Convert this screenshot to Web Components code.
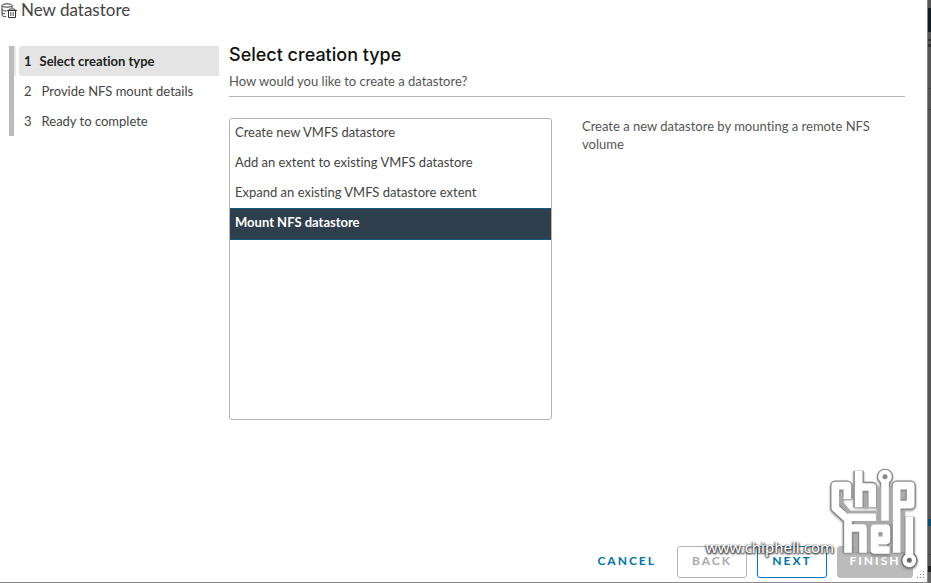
<!DOCTYPE html>
<html lang="en">
<head>
<meta charset="utf-8">
<title>New datastore</title>
<style>
html,body{height:100%;margin:0}
body{font:13px/18px Lato,sans-serif;font-variant-ligatures:none;color:#555;background:#fff;overflow:hidden}
</style>
</head>
<body>
<ds-app></ds-app>
<script>
const define=(name,html,ready)=>customElements.define(name,class extends HTMLElement{
  connectedCallback(){
    if(this.shadowRoot)return;
    const t=document.createElement('template');
    t.innerHTML=html;
    this.attachShadow({mode:'open'}).append(t.content.cloneNode(true));
    if(ready)ready(this,this.shadowRoot);
  }
});

define('ds-title',`<style>
:host{display:flex;align-items:flex-start;gap:4px;height:22px}
h1{margin:0;font-size:17px;line-height:20px;font-weight:400;color:#444}
svg{width:16px;height:16px;margin:3px 0 0 1px}
</style>
<svg viewBox="0 0 16 16" fill="none" stroke="#333" aria-hidden="true"><ellipse cx="6" cy="2.500" rx="5" ry="1.700"/><path d="M1 2.500v9.500c0 1 1.500 1.700 4 1.700M11 2.500v2.500M1 6.500c.5 1 2 1.500 4.500 1.500M1 9.700c.5.700 1.500 1 3 1.200"/><path d="M6 7.500h10M7.500 7.500v7h7v-7M7.500 7.500l1-1.500h5l1 1.500"/><path d="M9.500 9v4M11 9v4M12.500 9v4" stroke-width=".6"/></svg>
<h1><slot></slot></h1>`);

define('ds-step',`<style>
:host{display:block;padding-left:3px;border-left:2px solid transparent}
button{display:flex;gap:10px;width:100%;height:30px;padding:0 5px 1px;border:0;border-radius:3px 0 0 3px;background:none;color:#444;font:400 13px/18px Lato,sans-serif;font-variant-ligatures:none;align-items:center;text-align:left}
:host([current]){border-left-color:#e8e8e8}
:host([current]) button{gap:8px;background:#e4e4e4;color:#222;font-weight:700}
</style><button type="button"><span id="n"></span><span><slot></slot></span></button>`,
(h,r)=>{r.getElementById('n').textContent=h.getAttribute('n');if(h.hasAttribute('current'))r.querySelector('button').setAttribute('aria-current','step')});

define('ds-steps',`<style>
:host{display:block;border-left:5px solid #bbb}
</style><slot></slot>`);

define('ds-heading',`<style>
:host{display:block;border-bottom:1px solid #b5b5b5;padding-bottom:6px}
h2{margin:0;padding-top:1px;font:500 18px/24px Inter,sans-serif;color:#111}
p{margin:5px 0 0}
</style><h2><slot name="title"></slot></h2><p><slot></slot></p>`);

define('ds-option',`<style>
:host{display:block}
button{display:block;width:100%;height:30px;padding:0 5px 5px;border:0;background:none;text-align:left;color:#444;font:400 13px/18px Lato,sans-serif;font-variant-ligatures:none}
:host([selected]){margin-top:-1px}
:host([selected]) button{height:32px;background:#2f3e4d;color:#fff;font-weight:700;border:solid #12597c;border-width:1px 0}
</style><button type="button" role="option"><slot></slot></button>`,
(h,r)=>r.querySelector('button').setAttribute('aria-selected',h.hasAttribute('selected')));

define('ds-listbox',`<style>
:host{display:block;box-sizing:border-box;height:302px;border:1px solid #b5b5b5;border-radius:3px;overflow:auto}
</style><div role="listbox" aria-label="Creation type"><slot></slot></div>`);

define('ds-button',`<style>
:host{display:block}
button{height:32px;min-width:70px;padding:0 12px 2px;border:1px solid #0079b8;border-radius:3px;background:none;color:#0072a3;font:700 12px/18px Lato,sans-serif;letter-spacing:2px}
:host([kind=link]) button{border-color:transparent;padding:0 10px 2px}
button:disabled{border-color:#b5b5b5;color:#aaa}
:host([kind=solid]) button{background:#bbb;color:#fff;border-color:#bbb;min-width:76px;padding:0 10px 2px}
</style><button type="button"><slot></slot></button>`,
(h,r)=>{r.querySelector('button').disabled=h.hasAttribute('disabled')});

define('ds-watermark',`<style>
:host{position:absolute;right:5px;bottom:7px;pointer-events:none}
svg{display:block;width:98px;height:111px;filter:drop-shadow(0 1px 1px #888)}
span{position:absolute;right:88px;bottom:19px;font:15px/18px "Noto Sans","Open Sans",sans-serif;color:#fff;text-shadow:0 1px 2px #333,1px 1px 2px #333,-1px 0 2px #555}
</style>
<svg viewBox="0 0 294 333" fill="none" aria-hidden="true">
<defs><filter id="b" x="-10%" y="-10%" width="120%" height="120%"><feGaussianBlur stdDeviation="2"/></filter>
<g id="l" stroke-linejoin="round"><path d="M70 105V65H34V132L72 166V266M72 160H156"/><path d="M104 20V130M104 69H145V130M183 50V170"/><path d="M218 266V65H260V122H218M256 158V276"/><path d="M72 192H117V266M152 229H187V193H152V258H197"/></g></defs>
<g filter="url(#b)"><use href="#l" stroke="#8a8a8a" stroke-width="31"/><circle cx="183" cy="38" r="24" fill="#8a8a8a"/><circle cx="256" cy="289" r="25" fill="#777"/></g>
<path d="M52 98V118L76 146H156M125 88V132M165 70V172M200 70V180M90 180H195M236 84V104M236 140V264M96 210V264M136 182V264M170 211V215M152 243H188" stroke="#aaa" stroke-width="12"/>
<use href="#l" stroke="#fff" stroke-width="23"/>
<g stroke="#fff" stroke-width="13"><circle cx="183" cy="38" r="14" fill="#888"/><circle cx="256" cy="289" r="14" fill="#666"/></g></svg>
<span>www.chiphell.com</span>`);

define('ds-grip',`<style>
:host{position:absolute;right:2px;bottom:3px;width:8px;height:8px}
svg{display:block}
</style><svg width="8" height="8" viewBox="0 0 8 8" fill="#888" aria-hidden="true"><path d="M6 0h1v1H6zM3 3h1v1H3zM6 3h1v1H6zM0 6h1v1H0zM3 6h1v1H3zM6 6h1v1H6z"/></svg>`);

define('ds-backdrop',`<style>
:host{display:block;width:3px;background:linear-gradient(#555 8px,#101b23 8px 32px,#555 32px 39px,#333 39px 41px,#555 41px 44px,#333 44px 47px,#555 47px 88px,#444 88px 89px,#555 89px 109px,#444 109px 110px,#555 110px 519px,#124a6c 519px 526px,#555 526px 554px,#444 554px 555px,#555 555px 566px,#222 566px 572px,#666 572px)}
</style>`);

define('ds-app',`<style>
:host{display:flex;height:100%}
main{flex:1;min-width:0;display:flex;flex-direction:column;position:relative;border-right:1px solid #888;border-bottom:1px solid #888;box-sizing:border-box}
.body{flex:1;display:grid;grid-template-columns:210px 1fr;column-gap:10px;padding:20px 22px 0 9px}
ds-steps{align-self:start;margin-top:4px}
.cols{display:grid;grid-template-columns:323px 1fr;column-gap:30px;margin-top:20px}
ds-listbox{margin-top:1px}
.cols p{margin:0;padding-right:20px}
footer{display:flex;justify-content:flex-end;gap:10px;padding:0 14px 4px}
</style>
<main>
<ds-title>New datastore</ds-title>
<div class="body">
<ds-steps><ds-step n="1" current>Select creation type</ds-step><ds-step n="2">Provide NFS mount details</ds-step><ds-step n="3">Ready to complete</ds-step></ds-steps>
<section><ds-heading><span slot="title">Select creation type</span>How would you like to create a datastore?</ds-heading>
<div class="cols"><ds-listbox><ds-option>Create new VMFS datastore</ds-option><ds-option>Add an extent to existing VMFS datastore</ds-option><ds-option>Expand an existing VMFS datastore extent</ds-option><ds-option selected>Mount NFS datastore</ds-option></ds-listbox>
<p>Create a new datastore by mounting a remote NFS volume</p></div></section>
</div>
<footer><ds-button kind="link">CANCEL</ds-button><ds-button disabled>BACK</ds-button><ds-button>NEXT</ds-button><ds-button kind="solid" disabled>FINISH</ds-button></footer>
<ds-watermark></ds-watermark><ds-grip></ds-grip>
</main><ds-backdrop></ds-backdrop>`);
</script>
</body>
</html>
